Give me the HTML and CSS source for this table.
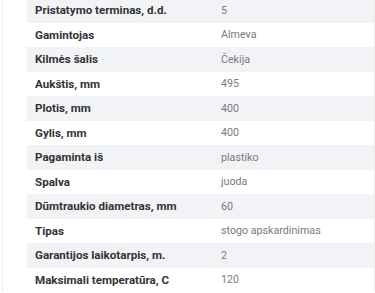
FILE: index.html
```html
<!DOCTYPE html>
<html>
<head>
<meta charset="utf-8">
<link rel="stylesheet" href="styles.css">
</head>
<body>
<div class="page">
  <table class="specs">
    <tr><th>Pristatymo terminas, d.d.</th><td>5</td></tr>
    <tr><th>Gamintojas</th><td>Almeva</td></tr>
    <tr><th>Kilmės šalis</th><td>Čekija</td></tr>
    <tr><th>Aukštis, mm</th><td>495</td></tr>
    <tr><th>Plotis, mm</th><td>400</td></tr>
    <tr><th>Gylis, mm</th><td>400</td></tr>
    <tr><th>Pagaminta iš</th><td>plastiko</td></tr>
    <tr><th>Spalva</th><td>juoda</td></tr>
    <tr><th>Dūmtraukio diametras, mm</th><td>60</td></tr>
    <tr><th>Tipas</th><td>stogo apskardinimas</td></tr>
    <tr><th>Garantijos laikotarpis, m.</th><td>2</td></tr>
    <tr><th>Maksimali temperatūra, C</th><td>120</td></tr>
  </table>
</div>
</body>
</html>
```

FILE: styles.css
```css
html, body {
  margin: 0;
  padding: 0;
  background: #fff;
  overflow: hidden;
}
.page {
  margin-top: -2px;
  margin-left: 2px;
  border-left: 1px solid #ececec;
  padding-left: 24px;
  border-right: 1px solid #ececec;
  font-family: Roboto, "Liberation Sans", sans-serif;
}
.specs {
  width: 100%;
  border-collapse: collapse;
}
.specs tr {
  height: 24.5px;
}
.specs tr:nth-child(odd) {
  background: #f2f3f7;
}
.specs th {
  width: 170px;
  text-align: left;
  font-weight: bold;
  font-size: 11.6px;
  color: #333;
  padding: 0 8px;
}
.specs td {
  color: #7a7a7a;
  font-size: 10.7px;
  padding: 0 8px;
}
```
